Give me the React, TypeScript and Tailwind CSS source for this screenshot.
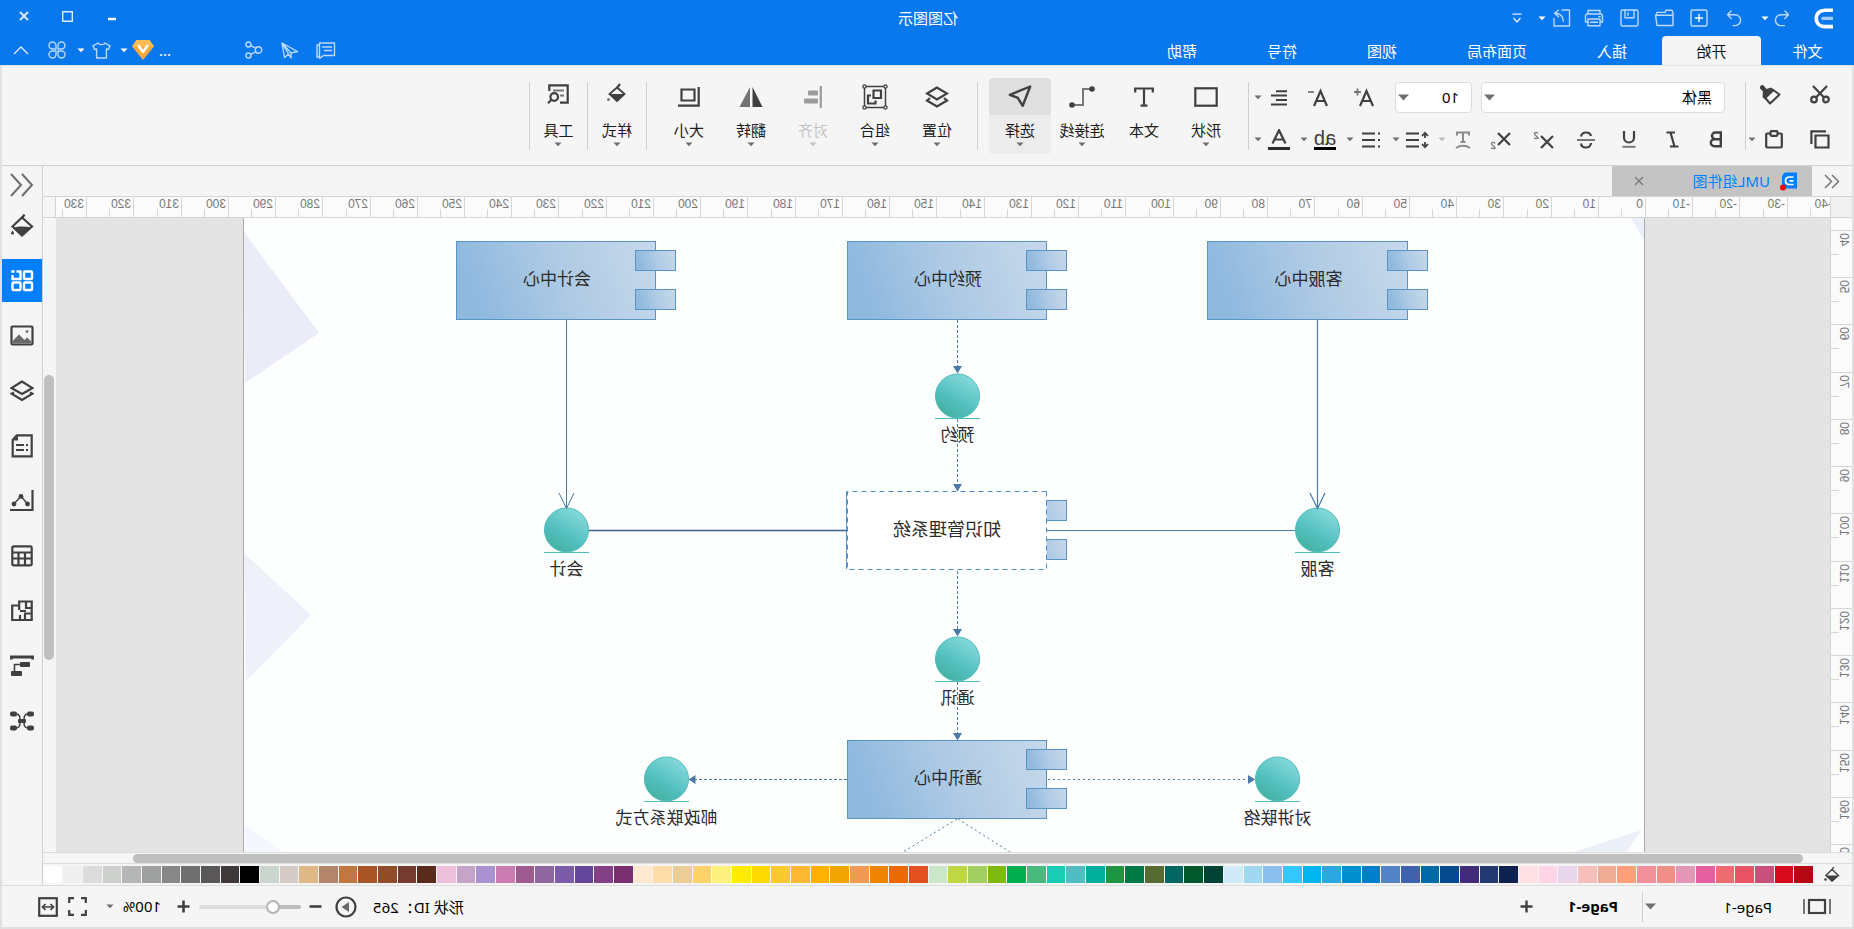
import React from "react";
import type { ReactNode } from "react";

const INK = "#404040";

/* ---------- small building blocks ---------- */

function Svg({ w = 20, h, vb, children, className = "" }: { w?: number; h?: number; vb?: string; children: ReactNode; className?: string }) {
  const height = h ?? w;
  return (
    <svg width={w} height={height} viewBox={vb ?? `0 0 ${w} ${height}`} fill="none" className={`shrink-0 ${className}`} aria-hidden="true">
      {children}
    </svg>
  );
}

function Caret({ color = "#6e6e6e", label = "展开" }: { color?: string; label?: string }) {
  return (
    <button type="button" aria-label={label} className="flex w-2.5 items-center justify-center">
      <Svg w={8} h={5}><path d="M0.5 0.5h7L4 4.2z" fill={color} /></Svg>
    </button>
  );
}

function Tool({ label, className = "w-8", children }: { label: string; className?: string; children: ReactNode }) {
  return (
    <button type="button" aria-label={label} className={`flex h-full items-center justify-center ${className}`}>
      {children}
    </button>
  );
}

/* ---------- title bar ---------- */

const quick = { stroke: "#bcd9fb", strokeWidth: 1.4, strokeLinejoin: "round" as const, strokeLinecap: "round" as const };

function TitleBar() {
  return (
    <div className="flex h-9 items-center">
      <div className="flex h-full flex-1 items-center">
        <Svg w={19} h={21} className="ml-[21px]">
          <path d="M0 2.2h8c5 0 8.7 3.2 8.7 8.2s-3.7 8.2-8.7 8.2H0" stroke="#fff" strokeWidth="3.6" />
          <path d="M1 10.4h9" stroke="#a5cdfb" strokeWidth="3.4" strokeLinecap="round" />
        </Svg>
        <Tool label="撤销" className="ml-5 w-6">
          <Svg w={16} h={17}><path d="M5 1L1.5 4.8 5.2 8.4M1.8 4.8h7.4a5.3 5.3 0 0 1 0 10.8H5.5" {...quick} /></Svg>
        </Tool>
        <Caret color="#fff" label="撤销记录" />
        <Tool label="重做" className="ml-2 w-[35px]">
          <Svg w={16} h={17}><path d="M11 1l3.5 3.8L10.8 8.4M14.2 4.8H6.8a5.3 5.3 0 0 0 0 10.8h2" {...quick} /></Svg>
        </Tool>
        <Tool label="新建" className="w-[35px]">
          <Svg w={18}><rect x="1" y="1" width="16" height="16" rx="1.5" {...quick} /><path d="M9 5.5v7M5.5 9h7" {...quick} stroke="#fff" /></Svg>
        </Tool>
        <Tool label="打开" className="w-[35px]">
          <Svg w={20} h={18}><path d="M1 4l1-2.8h6l1 2.2h8l.8 2.8M1 16.5V7.5l1-1.3h16.5L17 16.5zM1 15V4" {...quick} /></Svg>
        </Tool>
        <Tool label="保存" className="w-[35px]">
          <Svg w={19} h={18}><rect x="1" y="1" width="17" height="16" rx="1.5" {...quick} /><path d="M5 1.2v7.6h9V1.2M11 4v2.2" {...quick} /></Svg>
        </Tool>
        <Tool label="打印" className="w-[35px]">
          <Svg w={20} h={18}><path d="M4 5V1.5h12V5M4 13H1.5V6.5L2.8 5h14.4l1.3 1.5V13H16M4 10h12v6.8H4zM6.5 13.2h7M3.8 7.6h1.5" {...quick} /></Svg>
        </Tool>
        <Tool label="导出" className="w-[30px]">
          <Svg w={18}><path d="M9 1H1.5v16H17V9.5M12.5 1.2l4 3-4 3.6M16 4.2c-4.500 0-8 2.600-8.400 8" {...quick} /></Svg>
        </Tool>
        <Caret color="#fff" label="导出选项" />
        <Tool label="更多" className="ml-2 w-6">
          <Svg w={10} h={11}><path d="M0.5 1.2h9M1.5 5l3.5 4 3.5-4" stroke="#e4f0fe" strokeWidth="1.3" /></Svg>
        </Tool>
      </div>
      <h1 className="pb-px text-[15px] leading-5 text-white">亿图图示</h1>
      <div className="flex h-full flex-1 items-center justify-end pr-0.5 pb-1">
        <Tool label="最小化" className="w-11"><Svg w={8} h={12}><path d="M0 9h8" stroke="#fff" strokeWidth="2.4" /></Svg></Tool>
        <Tool label="最大化" className="w-11"><Svg w={11}><path d="M0.7 0.7h9.6v9.6H0.7z" stroke="#dcebfd" strokeWidth="1.4" /></Svg></Tool>
        <Tool label="关闭" className="w-11"><Svg w={10}><path d="M1 1l8 8M9 1L1 9" stroke="#dcebfd" strokeWidth="2" /></Svg></Tool>
      </div>
    </div>
  );
}

const menuTabs = ["插入", "页面布局", "视图", "符号", "帮助"];

function MenuBar() {
  return (
    <div className="flex h-[30px] justify-between">
      <nav className="flex text-[15px] leading-[30px] text-white">
        <a href="#file" className="w-[93px] text-center">文件</a>
        <a href="#home" className="w-[99px] rounded-t-sm bg-[#f5f5f5] text-center text-[#111]">开始</a>
        {menuTabs.map((t) => (
          <a key={t} href={`#${t}`} className="px-[35px]">{t}</a>
        ))}
      </nav>
      <div className="flex items-center pr-0.5 pb-0.5">
        <Tool label="评论" className="w-9">
          <Svg w={20} h={17}><path d="M3.500 1h15v12.500h-11l-4 3zM6.500 5h9M8.500 8.500h7M3.500 3H1v12.500l2-1.500" {...quick} transform="matrix(-1 0 0 1 20 0)" /></Svg>
        </Tool>
        <Tool label="发送" className="w-9">
          <Svg w={18} h={17}><path d="M17 1L14.5 15.5 10.5 12 8 16V11L1.5 9.500zM17 1L8 11M16.800 1L10.500 12" {...quick} /></Svg>
        </Tool>
        <Tool label="分享" className="w-9">
          <Svg w={18} h={18}>
            <circle cx="4.500" cy="9" r="3.200" {...quick} /><circle cx="14.500" cy="3.500" r="2.500" {...quick} /><circle cx="14.500" cy="14.500" r="2.500" {...quick} />
            <path d="M7.200 7.200l5-2.600M7.200 10.800l5 2.600" {...quick} />
          </Svg>
        </Tool>
        <span className="ml-[60px] w-[22px] text-center text-[15px] leading-5 text-white">...</span>
        <Tool label="会员" className="w-[22px]">
          <Svg w={22} h={20}>
            <path d="M4.500 0h13L22 6.500 11 20 0 6.500z" fill="#f3a93c" />
            <path d="M4.500 0h13L22 6.500H0z" fill="#fbbd55" />
            <path d="M6.800 6l4.200 6 4.200-6" stroke="#fff" strokeWidth="2.600" strokeLinecap="round" strokeLinejoin="round" />
          </Svg>
        </Tool>
        <span className="flex w-4 justify-center"><Caret color="#fff" label="会员选项" /></span>
        <Tool label="主题" className="w-7">
          <Svg w={19} h={17}><path d="M6 1c.8 2.200 6.200 2.200 7 0l5 2.800-1.600 3.800-2-.6V16H4.600V7l-2 .6L1 3.800z" {...quick} /></Svg>
        </Tool>
        <span className="flex w-[14px] justify-center"><Caret color="#fff" label="主题选项" /></span>
        <Tool label="应用" className="w-[34px]">
          <Svg w={18} h={18}>
            <path d="M8 8H4.500A3.500 3.500 0 1 1 8 4.500zM10 8h3.500A3.500 3.500 0 1 0 10 4.500zM8 10H4.500A3.500 3.500 0 1 0 8 13.500zM10 10h3.500A3.500 3.500 0 1 1 10 13.500z" {...quick} />
          </Svg>
        </Tool>
        <Tool label="收起功能区" className="w-[38px]">
          <Svg w={16} h={9}><path d="M1 8l7-7 7 7" stroke="#dcebfd" strokeWidth="1.400" /></Svg>
        </Tool>
      </div>
    </div>
  );
}

/* ---------- ribbon ---------- */

const ink = { stroke: INK, strokeWidth: 2.2 };

function Divider() {
  return <span className="mt-4 h-[68px] w-px shrink-0 bg-[#cfcfcf]" />;
}

function FieldCaret() {
  return (
    <Svg w={11} h={7} className="pointer-events-none absolute top-3 right-[3px]"><path d="M0 0.500h11L5.500 6.500z" fill="#707070" /></Svg>
  );
}

function ClipboardGroup() {
  return (
    <div className="w-[106px] pt-[6px] pl-[7px]">
      <div className="flex h-[45px]">
        <Tool label="剪切" className="w-[50px]">
          <Svg w={20} h={19}>
            <circle cx="4" cy="14.500" r="2.800" {...ink} /><circle cx="16" cy="14.500" r="2.800" {...ink} />
            <path d="M3 1l11 11.500M17 1L6 12.500" {...ink} />
          </Svg>
        </Tool>
        <Tool label="格式刷" className="w-[50px]">
          <Svg w={21} h={20}>
            <path d="M1.500 9.500L8.500 4.500 16.500 12 11 18.500z" stroke={INK} strokeWidth="2" strokeLinejoin="round" />
            <path d="M6.500 5.500L10 2.500l4.500 1.500L17 1a2 2 0 0 1 3.500 3L18 6.500l.5 5.500-2.500 2.500z" fill={INK} />
          </Svg>
        </Tool>
      </div>
      <div className="flex h-[45px]">
        <Tool label="复制" className="w-[50px]">
          <Svg w={20} h={19}><path d="M1.500 5.500h13v12h-13z" {...ink} /><path d="M4 1.400h14.600V14" {...ink} /></Svg>
        </Tool>
        <Tool label="粘贴" className="ml-1 w-[34px]">
          <Svg w={18} h={19}><rect x="1.200" y="3.500" width="15.600" height="14" rx="1" {...ink} /><rect x="5.500" y="1.200" width="7" height="4.600" rx="1" {...ink} fill="#f5f5f5" /></Svg>
        </Tool>
        <Caret label="粘贴选项" />
      </div>
    </div>
  );
}

function FontGroup() {
  return (
    <div className="pt-[6px] pr-1">
      <div className="flex h-[45px] items-center pt-[6px] pl-5">
        <div className="relative mr-[9px]">
          <select aria-label="字体" className="block h-[31px] w-[244px] appearance-none rounded-sm border border-[#dcdcdc] bg-white pl-3 text-[15px] text-black">
            <option>黑体</option>
          </select>
          <FieldCaret />
        </div>
        <div className="relative">
          <select aria-label="字号" className="block h-[31px] w-[77px] appearance-none rounded-sm border border-[#dcdcdc] bg-white pl-3 text-[15px] text-black">
            <option>10</option>
          </select>
          <FieldCaret />
        </div>
        <Tool label="增大字号" className="ml-2 w-[46px]">
          <Svg w={20} h={19}><path d="M1 18L7.500 3 14 18M3.500 13h8" {...ink} /><path d="M13 4h7M16.500 0.500v7" stroke="#777" strokeWidth="1.800" /></Svg>
        </Tool>
        <Tool label="减小字号" className="w-[46px]">
          <Svg w={20} h={19}><path d="M1 18L7.500 3 14 18M3.500 13h8" {...ink} /><path d="M14 4h6" stroke="#777" strokeWidth="1.800" /></Svg>
        </Tool>
        <Tool label="对齐方式">
          <Svg w={18} h={16}><path d="M1 1.200h11M1 5.600h16M1 10h11M1 14.400h16" stroke={INK} strokeWidth="2" /></Svg>
        </Tool>
        <Caret label="对齐选项" />
      </div>
      <div className="flex h-[45px] items-center pl-2">
        <Tool label="加粗" className="w-[43px]">
          <Svg w={13} h={17}><path d="M1.200 1.500h5.500a3.300 3.300 0 0 1 0 6.700H1.200zM1.200 8.200h6.500a3.500 3.500 0 0 1 0 7H1.200z" stroke={INK} strokeWidth="2.400" /></Svg>
        </Tool>
        <Tool label="斜体" className="w-[43px]">
          <Svg w={13} h={17}><path d="M4 1.500h8.500M0.500 15.500H9M8.500 1.500l-4 14" {...ink} /></Svg>
        </Tool>
        <Tool label="下划线" className="w-[43px]">
          <Svg w={14} h={17}><path d="M2 0v6.500a5 5 0 0 0 10 0V0" {...ink} /><path d="M0.500 15.800h13" stroke="#777" strokeWidth="2" /></Svg>
        </Tool>
        <Tool label="删除线" className="w-[43px]">
          <Svg w={18} h={18}><path d="M14 5.500C13.500 3 11.500 1.500 9 1.500S4.500 2.500 4 5M4 12c.3 3 2.500 4.500 5 4.500s4.800-1.200 5-4" {...ink} /><path d="M0 9h18" stroke="#777" strokeWidth="2" /></Svg>
        </Tool>
        <Tool label="上标" className="w-[43px]">
          <Svg w={21} h={18}><path d="M1 5l12 12M13 5L1 17" {...ink} /><path d="M16 2.500c.5-1.500 3.500-1.500 3.500.3S16 5.500 16 7.300h4" stroke="#777" strokeWidth="1.300" /></Svg>
        </Tool>
        <Tool label="下标" className="w-[43px]">
          <Svg w={21} h={18}><path d="M1 2l12 12M13 2L1 14" {...ink} /><path d="M16 12.500c.5-1.500 3.500-1.500 3.500.3S16 15.500 16 17.300h4" stroke="#777" strokeWidth="1.300" /></Svg>
        </Tool>
        <Tool label="文字路径">
          <Svg w={16} h={18}><path d="M2 4.500V1.500h12v3M8 1.500v9.500M5.500 11h5" stroke="#8c8c8c" strokeWidth="2" /><path d="M1 17c4-3 10-3 14 0" stroke="#8c8c8c" strokeWidth="1.800" /></Svg>
        </Tool>
        <Caret color="#bdbdbd" label="文字路径选项" />
        <Tool label="行距" className="ml-1 w-8">
          <Svg w={24} h={18}><path d="M4 2v5M4 11v5M1 5l3-3.200L7 5M1 13l3 3.200L7 13" stroke={INK} strokeWidth="1.800" /><path d="M10 2.500h13M10 9h13M10 15.500h13" stroke={INK} strokeWidth="2.200" /></Svg>
        </Tool>
        <Caret label="行距选项" />
        <Tool label="列表" className="ml-1 w-8">
          <Svg w={18} h={16}><path d="M0 1.500h2M0 8h2M0 14.500h2M5 1.500h13M5 8h13M5 14.500h13" stroke={INK} strokeWidth="2.200" /></Svg>
        </Tool>
        <Caret label="列表选项" />
        <Tool label="文字高亮" className="ml-1 w-8">
          <span className="border-b-3 border-black font-['Liberation_Sans'] text-[20px] leading-[18px] text-[#404040]">ab</span>
        </Tool>
        <Caret label="高亮选项" />
        <Tool label="文字颜色" className="ml-1 w-8">
          <Svg w={22} h={21}><path d="M4.500 14.500L11 1.200l6.500 13.300M6.500 10.500h9" {...ink} /><path d="M0 19.500h22" stroke="#2c2c2c" strokeWidth="3" /></Svg>
        </Tool>
        <Caret label="颜色选项" />
      </div>
    </div>
  );
}

function BigTool({ label, children, caret = true, active = false, disabled = false, className = "w-[62px]" }: { label: string; children: ReactNode; caret?: boolean; active?: boolean; disabled?: boolean; className?: string }) {
  return (
    <button type="button" disabled={disabled} aria-pressed={active} className={`mt-3 flex h-[76px] flex-col items-center rounded-sm ${active ? "bg-[#ececec]" : ""} ${className}`}>
      <span className={`flex h-[37px] w-full items-center justify-center rounded-t-sm ${active ? "bg-[#dfdfdf]" : ""}`}>{children}</span>
      <span className={`mt-[5px] text-[15px] leading-5 ${disabled ? "text-[#c4c4c4]" : "text-[#1c1c1c]"}`}>{label}</span>
      {caret && <Svg w={8} h={5} className="mt-0.5"><path d="M0.500 0.500h7L4 4.200z" fill={disabled ? "#c4c4c4" : "#6e6e6e"} /></Svg>}
    </button>
  );
}

function Ribbon() {
  return (
    <div className="flex h-[101px] border-t border-b border-t-[#e6e6e6] border-b-[#d2d2d2]">
      <ClipboardGroup />
      <Divider />
      <FontGroup />
      <Divider />
      <div className="flex pr-[11px] pl-[11px]">
        <BigTool label="形状"><Svg w={24} h={20}><rect x="1.300" y="1.300" width="21.400" height="17.400" {...ink} /></Svg></BigTool>
        <BigTool label="文本" caret={false}><Svg w={20} h={20}><path d="M1.200 5.500V1.500h17.600v4M10 1.500v17M6.500 18.600h7" {...ink} /></Svg></BigTool>
        <BigTool label="连接线">
          <Svg w={26} h={22}><path d="M4 3h8v16h10" stroke="#777" strokeWidth="2" /><circle cx="3" cy="3" r="2.800" fill={INK} /><circle cx="23" cy="19" r="2.800" fill={INK} /></Svg>
        </BigTool>
        <BigTool label="选择" active><Svg w={24} h={23}><path d="M1.800 1.500l20.400 8.300-8 3L9.300 20.800z" stroke={INK} strokeWidth="2.400" strokeLinejoin="round" /></Svg></BigTool>
      </div>
      <Divider />
      <div className="flex pr-[11px] pl-[9px]">
        <BigTool label="位置">
          <Svg w={24} h={22}><path d="M12 1.500L22 7.500 12 13.500 2 7.500z" {...ink} /><path d="M5 12l-3 2.500L12 20.500l10-6-3-2.500" {...ink} /></Svg>
        </BigTool>
        <BigTool label="组合">
          <Svg w={26} h={26}>
            <rect x="2.500" y="2.500" width="21" height="21" stroke={INK} strokeWidth="1.500" />
            <g fill="#f5f5f5" stroke={INK} strokeWidth="1.300"><circle cx="2.500" cy="2.500" r="1.600" /><circle cx="23.500" cy="2.500" r="1.600" /><circle cx="2.500" cy="23.500" r="1.600" /><circle cx="23.500" cy="23.500" r="1.600" /></g>
            <path d="M7 6.500h7.500v7.500H7zM17 11.500h3v8h-7.500v-3" {...ink} />
          </Svg>
        </BigTool>
        <BigTool label="对齐" disabled>
          <Svg w={18} h={22}><path d="M1.200 0v22" stroke="#9b9b9b" strokeWidth="2.200" /><rect x="4" y="4.500" width="10" height="5" rx="1" fill="#9b9b9b" /><rect x="4" y="12.500" width="14" height="5" rx="1" fill="#9b9b9b" /></Svg>
        </BigTool>
        <BigTool label="翻转"><Svg w={24} h={20}><path d="M10.500 0v20H0.500z" fill="#404040" /><path d="M13 0v20h10.500z" fill="#737373" /></Svg></BigTool>
        <BigTool label="大小"><Svg w={22} h={20}><path d="M5.500 2.500h13v11h-13z" {...ink} /><path d="M1.300 0v18.700H22" {...ink} /></Svg></BigTool>
      </div>
      <Divider />
      <BigTool label="样式" className="w-[58px]">
        <Svg w={20} h={21} className="mb-[6px]"><path d="M2.500 11L10 4.500 17.500 11 10 18z" stroke={INK} strokeWidth="1.800" /><path d="M2.500 11h15L10 18.500z" fill={INK} /><path d="M10 5L7 1" stroke={INK} strokeWidth="2.200" /><circle cx="18.500" cy="16.500" r="1.500" fill="#777" /></Svg>
      </BigTool>
      <Divider />
      <BigTool label="工具" className="w-[57px]">
        <Svg w={22} h={20} className="mb-[6px]"><path d="M9 18.700H1.300V1.300h18.400V7" {...ink} /><path d="M5 6.500h11M5 11.500h4" stroke="#777" strokeWidth="2" /><circle cx="14.800" cy="13" r="3.800" {...ink} /><path d="M17.500 15.700l3.500 3.500" {...ink} /></Svg>
      </BigTool>
      <Divider />
    </div>
  );
}

/* ---------- document tabs ---------- */

function DocumentTabs() {
  return (
    <div className="flex h-[31px] shrink-0 border-b border-[#d4d4d4]">
      <Tool label="展开左侧面板" className="w-10">
        <Svg w={16} h={15}><path d="M8 1L1.500 7.500 8 14M15 1L8.500 7.500 15 14" stroke="#777" strokeWidth="1.500" /></Svg>
      </Tool>
      <div className="flex w-[200px] items-center bg-[#c4c4c4] pl-[15px]">
        <Svg w={17} h={20}>
          <path d="M0 1.500h12l3 3v13H0z" fill="#0080ff" />
          <path d="M3.500 6h4.200c5 0 5 7.500 0 7.500H3.500M3.500 9.800h4" stroke="#fff" strokeWidth="1.700" />
          <circle cx="14" cy="16.500" r="3" fill="#f00" />
        </Svg>
        <a href="#uml" className="ml-[10px] flex-1 text-[15px] leading-5 text-[#0080ff]">UML组件图</a>
        <button type="button" aria-label="关闭标签" className="mr-[22px]"><Svg w={10}><path d="M1 1l8 8M9 1L1 9" stroke="#777" strokeWidth="1.300" /></Svg></button>
      </div>
    </div>
  );
}

/* ---------- rulers ---------- */

const STEP = 47.24;

function TopRuler() {
  const marks = Array.from({ length: 38 }, (_, i) => i - 4);
  return (
    <svg width="100%" height="20" className="block min-w-0 flex-1 bg-[#fbfbfb] font-['Liberation_Sans']">
      {marks.map((n) => {
        const x = Math.round(184 + n * STEP);
        return (
          <g key={n}>
            <path d={`M${x + 0.5} 0V20M${Math.round(x + STEP / 2) + 0.5} 12V20`} stroke="#d6d6d6" />
            <text x={x + 3} y="11" fontSize="12" fill="#777">{n * 10}</text>
          </g>
        );
      })}
    </svg>
  );
}

function SideRuler() {
  const marks = Array.from({ length: 14 }, (_, i) => i);
  return (
    <svg width="21" height="100%" className="block bg-[#fbfbfb] font-['Liberation_Sans']">
      {marks.map((n) => {
        const y = Math.round(12 + n * STEP);
        const label = String(40 + n * 10);
        return (
          <g key={n}>
            <path d={`M0 ${y + 0.5}H21M13 ${Math.round(y + STEP / 2) + 0.5}H21`} stroke="#d6d6d6" />
            <text transform={`translate(12 ${y + 3}) rotate(-90)`} textAnchor="end" fontSize="12" fill="#777">{label}</text>
          </g>
        );
      })}
    </svg>
  );
}

/* ---------- diagram ---------- */

function Component({ x, y, w = 199, label }: { x: number; y: number; w?: number; label: string }) {
  return (
    <g>
      <g stroke="#5a94c3">
        <rect x={x} y={y} width={w} height="78" fill="url(#blue)" />
        <rect x={x - 20} y={y + 9} width="40" height="20" fill="url(#blue)" />
        <rect x={x - 20} y={y + 48} width="40" height="20" fill="url(#blue)" />
      </g>
      <text x={x + w / 2 - 1} y={y + 43} textAnchor="middle" fontSize="17" fill="#2b2b2b">{label}</text>
    </g>
  );
}

function Port({ x, y, label }: { x: number; y: number; label: string }) {
  return (
    <g>
      <circle cx={x} cy={y} r="22" fill="url(#teal)" stroke="#4dbcba" />
      <path d={`M${x - 22.5} ${y + 22.5}h45`} stroke="#4dbcba" />
      <text x={x} y={y + 45} textAnchor="middle" fontSize="17" fill="#2b2b2b">{label}</text>
    </g>
  );
}

function Diagram() {
  const wire = "#4a7aa5";
  return (
    <svg width="1400" height="100%" viewBox="210 218 1400 634" preserveAspectRatio="xMidYMin slice" className="block" role="img" aria-label="UML组件图">
      <defs>
        <linearGradient id="blue" x1="0" y1="0" x2="1" y2="0.150">
          <stop offset="0" stopColor="#c7d9eb" />
          <stop offset="0.500" stopColor="#b0cbe5" />
          <stop offset="1" stopColor="#8fb9df" />
        </linearGradient>
        <linearGradient id="teal" x1="0.200" y1="0" x2="0.800" y2="1">
          <stop offset="0" stopColor="#8bdcde" />
          <stop offset="0.600" stopColor="#52bfbf" />
          <stop offset="1" stopColor="#43af9b" />
        </linearGradient>
      </defs>
      <path d="M1610 232L1535 333 1609 383z" fill="#ebecf8" />
      <path d="M1610 553L1543 615 1608 681z" fill="#eef1f9" />
      <path d="M1609 825L1571 852h38z" fill="#f4f7fe" />
      <path d="M212 830L280 852H228z" fill="#ebf0f8" />
      <path d="M223 218H210v22z" fill="#ebeff9" />

      <Component x={446.5} y={241.5} w={200} label="客服中心" />
      <Component x={807.5} y={241.5} label="预约中心" />
      <Component x={1198.5} y={241.5} label="会计中心" />
      <Component x={807.5} y={740.5} label="通讯中心" />

      <g fill="url(#blue)" stroke="#5a94c3">
        <rect x="787.5" y="500.5" width="40" height="20" />
        <rect x="787.5" y="539.5" width="40" height="20" />
      </g>
      <rect x="807.5" y="491.5" width="199" height="78" fill="#fff" stroke="#4a8ede" strokeDasharray="5 4" />
      <path d="M1007.500 491v78" stroke="#5a94c3" />
      <text x="907" y="536" textAnchor="middle" fontSize="18" fill="#2b2b2b">知识管理系统</text>

      <Port x={896.5} y={396} label="预约" />
      <Port x={1287.5} y={530} label="会计" />
      <Port x={536.5} y={530} label="客服" />
      <Port x={896.5} y={659} label="通讯" />
      <Port x={1187.5} y={779} label="邮政联系方式" />
      <Port x={576.5} y={779} label="对讲联络" />

      <g stroke={wire} fill="none">
        <path d="M1287.500 320v188M1280 493l7.500 15.500L1295 493" />
        <path d="M536.500 320v188M529 493l7.500 15.500L544 493" strokeWidth="1.200" />
        <path d="M559 530.500h248" />
        <path d="M1007.500 530.500H1265" stroke="#3f5f93" strokeWidth="1.400" />
        <path d="M896.500 320v48M896.500 419v66M896.500 571v60M896.500 682v52" strokeDasharray="3 2" />
        <path d="M1007 779.500h152" strokeDasharray="3 2" />
        <path d="M806 779.500H606" strokeDasharray="2 3" />
        <path d="M897 819l54 33M896 819l-52 33" strokeDasharray="2 3" />
      </g>
      <g fill={wire}>
        <path d="M892 366h9l-4.500 7.500z" /><path d="M892 484h9l-4.500 7.500z" /><path d="M892 629h9l-4.500 7.500z" /><path d="M892 733h9l-4.500 7.500z" />
        <path d="M1158.500 775v9l7-4.500z" /><path d="M606 775v9l-7-4.500z" />
      </g>
    </svg>
  );
}

function Workspace() {
  return (
    <div className="flex min-h-0 flex-1 flex-col">
      <div className="flex h-[21px] shrink-0 border-b border-[#d4d4d4]">
        <span className="w-[22px] border-r border-[#d4d4d4] bg-[#f0f0f0]" />
        <TopRuler />
        <span className="w-[13px] border-l border-[#d4d4d4]" />
      </div>
      <div className="flex min-h-0 flex-1">
        <div className="w-[22px] shrink-0 overflow-hidden border-r border-[#d4d4d4]"><SideRuler /></div>
        <div className="flex min-w-0 flex-1 justify-center overflow-hidden bg-[#e4e4e4] pr-[3px]">
          <div className="shrink-0 border-x border-[#ababab] bg-[#fdfefe]"><Diagram /></div>
        </div>
        <div className="w-[13px] shrink-0 pt-[157px] pr-px pl-[2px]">
          <div className="h-[285px] rounded-full bg-[#bfbfbf]" />
        </div>
      </div>
      <div className="flex h-3 shrink-0 items-center border-t border-b border-[#dcdcdc] pr-[90px] pl-[49px]">
        <div className="h-[9px] flex-1 rounded-full bg-[#bfbfbf]" />
      </div>
    </div>
  );
}

const swatches = [
  "#b50714", "#d8091c", "#c8507b", "#e85466", "#ec6c72", "#e65f9f", "#e297b7", "#f08f88", "#f2909b", "#ffa07a",
  "#f0ab95", "#f7bfbb", "#ead6ea", "#ffd4e6", "#fee0e5", "#0f214e", "#223a70", "#412c7a", "#07498f", "#0269a8",
  "#3e62ae", "#5384c7", "#0080cc", "#0090d0", "#2ba8e2", "#00b4f0", "#33c8fb", "#8bc0ec", "#a0d8f0", "#d0ebf7",
  "#004335", "#00582d", "#006661", "#556b2f", "#007a45", "#1e9641", "#00b09c", "#50bdc3", "#19cdb4", "#49b97e",
  "#00ae50", "#7fb80e", "#a3cf62", "#bed742", "#cbe6c8", "#e2501f", "#ec6800", "#f08300", "#f29a53", "#f0a500",
  "#ffb000", "#fdb933", "#f8ca30", "#ffd900", "#ffec00", "#fdf17e", "#fcd26b", "#ebcd96", "#ffdca8", "#ffe8d0",
  "#7a306f", "#844084", "#63459a", "#7a5ca8", "#8f67a0", "#9f5a8f", "#cb7cb0", "#a992cf", "#c6a4c8", "#ecc0da",
  "#5a2a1c", "#753a30", "#914d2a", "#a85526", "#c1773f", "#b3866b", "#deb887", "#d5cbc6", "#cad5cd", "#000000",
  "#3e3838", "#5a5758", "#707070", "#878787", "#9da09e", "#b4b7b5", "#cdcfcd", "#dcdcdc", "#efefef", "#ffffff",
];

function Palette() {
  return (
    <div className="flex h-[21px] shrink-0 items-center">
      <Tool label="填充颜色" className="w-[39px]">
        <Svg w={16} h={17}><path d="M1.500 9.500L8 3.500l6 6L8 15z" stroke={INK} strokeWidth="1.400" /><path d="M1.500 9.500H14L8 15.500z" fill={INK} /><path d="M8 4L6.500 1" stroke={INK} strokeWidth="1.400" /><circle cx="14.500" cy="13.500" r="1.300" fill={INK} /></Svg>
      </Tool>
      <div className="flex h-[17px] min-w-0 flex-1 gap-px">
        {swatches.map((c, i) => (
          <button key={i} type="button" aria-label={c} className="min-w-0 flex-1" style={{ backgroundColor: c }} />
        ))}
      </div>
    </div>
  );
}

/* ---------- side bar ---------- */

const sideItems: { label: string; icon: ReactNode }[] = [
  {
    label: "样式",
    icon: <Svg w={24} h={24}><path d="M2 12.500L12 3.500l9.500 9L12 21.500z" {...ink} /><path d="M2.500 13.500c6-1.500 13-1.500 18 0L12 22z" fill={INK} /><path d="M12 4L9.500 0.500" {...ink} /><path d="M21.500 16.500c2 2.500 2 4 0 4s-2-1.500 0-4z" fill={INK} /></Svg>,
  },
  {
    label: "符号库",
    icon: <Svg w={24} h={22}><g stroke="#fff" strokeWidth="2.400"><rect x="2" y="1.500" width="8" height="7.500" rx="1" /><path d="M17.500 1.500H13.500v7.500h8V5M19.500 1.500h3.200" /><rect x="2" y="12.500" width="8" height="7.500" rx="1" /><rect x="13.500" y="12.500" width="8" height="7.500" rx="1" /></g></Svg>,
  },
  {
    label: "图片",
    icon: <Svg w={24} h={22}><rect x="1.500" y="1.500" width="21" height="18" rx="1" {...ink} /><path d="M3 18.500v-2.500l4-3.500 2.500 2.500 5.500-5.500 6 6v3z" fill="#6a6a6a" /><circle cx="7" cy="6.500" r="1.500" fill="#777" /></Svg>,
  },
  {
    label: "图层",
    icon: <Svg w={24} h={22}><path d="M12 1.500L22.500 8 12 14 1.500 8z" {...ink} /><path d="M4 12.500l-2.500 1.200L12 20l10.500-6.300L20 12.500" {...ink} /></Svg>,
  },
  {
    label: "备注",
    icon: <Svg w={22} h={24}><path d="M1.300 1.300h15l4 4.500v16.500h-19z" {...ink} /><path d="M15 1.500v5h5z" fill={INK} /><path d="M5 11h2M9 11h8M5 16h2M9 16h8" {...ink} /></Svg>,
  },
  {
    label: "图表",
    icon: <Svg w={24} h={22}><path d="M1.500 0v20H24" {...ink} /><path d="M6.500 14L13 6l7 8" stroke={INK} strokeWidth="1.400" /><circle cx="6.500" cy="14" r="2.400" fill={INK} /><circle cx="13" cy="6.500" r="2.400" fill={INK} /><circle cx="20" cy="14" r="2.400" fill={INK} /></Svg>,
  },
  {
    label: "表格",
    icon: <Svg w={22} h={22}><rect x="1.300" y="1.300" width="19.400" height="19" rx="1.500" {...ink} /><path d="M1 7.500h20M1 13.500h20M8 7.500V20M14.500 7.500V20" {...ink} /></Svg>,
  },
  {
    label: "平面图",
    icon: <Svg w={22} h={22}><path d="M1.300 1.500h12.500v4h7v14.500H1.300zM1.300 8H7V1.500M1.300 13.500H8V20M7 11h6M13.800 5.500V10M13 20v-5" {...ink} /></Svg>,
  },
  {
    label: "甘特图",
    icon: <Svg w={24} h={22}><path d="M1.200 4.500V2h21.600v2.500" stroke={INK} strokeWidth="3" /><rect x="4" y="7" width="10" height="5" rx="1" fill={INK} /><rect x="12" y="16" width="11" height="5" rx="1" fill={INK} /><path d="M14 9.500h5.500V16" stroke={INK} strokeWidth="1.600" /></Svg>,
  },
  {
    label: "思维导图",
    icon: <Svg w={24} h={22}><path d="M6 4c4 0 4 3 4 7s0 7-4 7M18 4c-4 0-4 3-4 7s0 7 4 7M9 11h6" stroke={INK} strokeWidth="1.500" /><g fill={INK}><rect x="0" y="1.500" width="7" height="5" rx="2" /><rect x="17" y="1.500" width="7" height="5" rx="2" /><rect x="0" y="15.500" width="7" height="5" rx="2" /><rect x="17" y="15.500" width="7" height="5" rx="2" /><rect x="8" y="9" width="8" height="4" rx="1" /></g></Svg>,
  },
];

function SideBar() {
  return (
    <aside className="flex w-[41px] shrink-0 flex-col border-l border-[#d0d0d0]">
      <Tool label="收起面板" className="w-full max-h-[38px] pr-px">
        <Svg w={24} h={24}><path d="M12 1L2 12l10 11M23 1L13 12l10 11" stroke="#6e6e6e" strokeWidth="2" /></Svg>
      </Tool>
      <div className="flex flex-col gap-3">
        {sideItems.map((it, i) => (
          <button key={it.label} type="button" aria-label={it.label} className={`flex h-[43px] items-center justify-center ${i === 1 ? "bg-[#0080ff]" : ""}`}>
            {it.icon}
          </button>
        ))}
      </div>
    </aside>
  );
}

/* ---------- status bar ---------- */

function StatusBar() {
  return (
    <footer className="flex h-[42px] shrink-0 items-center justify-between border-t border-[#dcdcdc] text-[15px] text-black">
      <div className="flex h-full items-center">
        <Tool label="页面视图" className="w-[70px]">
          <Svg w={28} h={17}><path d="M1 1v15M27 1v15" stroke="#777" strokeWidth="2" /><rect x="6" y="2" width="16" height="13" {...ink} /></Svg>
        </Tool>
        <span className="w-[115px] pt-0.5 pl-2.5">Page-1</span>
        <button type="button" aria-label="选择页面" className="w-6 pl-[11px]"><Svg w={11} h={7}><path d="M0 0.500h11L5.500 6.500z" fill="#707070" /></Svg></button>
        <span className="h-[30px] w-px bg-[#cfcfcf]" />
        <a href="#page-1" className="w-[93px] pl-6 font-bold">Page-1</a>
        <Tool label="添加页面" className="w-11"><Svg w={13}><path d="M6.500 0.500v12M0.500 6.500h12" {...ink} strokeWidth={2.4} /></Svg></Tool>
      </div>
      <div className="flex h-full items-center">
        <span className="mr-[15px] pt-0.5">形状 ID：265</span>
        <Tool label="演示" className="w-6"><Svg w={22}><circle cx="11" cy="11" r="9.500" {...ink} /><path d="M8 6v10l7.500-5z" fill="#6a6a6a" /></Svg></Tool>
        <Tool label="缩小" className="ml-[6px] w-6"><Svg w={13}><path d="M0.500 6.500h12" {...ink} strokeWidth={2.6} /></Svg></Tool>
        <label className="relative ml-[3px] flex h-5 w-[102px] items-center">
          <span className="sr-only">缩放</span>
          <input
            type="range"
            min={0}
            max={100}
            defaultValue={24}
            className="h-1 w-full appearance-none rounded-full bg-linear-to-r from-[#bdbdbd] from-25% to-[#dddddd] to-25% [&::-webkit-slider-thumb]:size-[14px] [&::-webkit-slider-thumb]:appearance-none [&::-webkit-slider-thumb]:rounded-full [&::-webkit-slider-thumb]:border-2 [&::-webkit-slider-thumb]:border-[#b5b5b5] [&::-webkit-slider-thumb]:bg-white"
          />
        </label>
        <Tool label="放大" className="ml-[3px] w-6"><Svg w={13}><path d="M6.500 0.500v12M0.500 6.500h12" {...ink} strokeWidth={2.6} /></Svg></Tool>
        <span className="ml-[11px] w-[46px]">100%</span>
        <Caret label="缩放比例" />
        <Tool label="全屏" className="ml-3 w-[30px]"><Svg w={19}><path d="M1.200 6V1.200H6M13 1.200h4.800V6M17.800 13v4.800H13M6 17.800H1.200V13" {...ink} /></Svg></Tool>
        <Tool label="适应宽度" className="mr-[31px] w-[30px]"><Svg w={20}><rect x="1.200" y="1.200" width="17.600" height="17.600" {...ink} /><path d="M5 10h10M7.500 7L4.500 10l3 3M12.500 7l3 3-3 3" stroke={INK} strokeWidth="1.700" /></Svg></Tool>
      </div>
    </footer>
  );
}

export default function App() {
  return (
    <div className="flex h-screen -scale-x-100 flex-col overflow-hidden bg-[#f5f5f5] font-['Noto_Sans','Noto_Sans_CJK_SC',sans-serif]">
      <header className="shrink-0 bg-[#0a78ed]">
        <TitleBar />
        <div className="h-[29px]"><MenuBar /></div>
      </header>
      <div className="flex min-h-0 flex-1 flex-col border-x-2 border-b-2 border-[#e0e0e0]">
        <div className="shrink-0"><Ribbon /></div>
        <main className="flex min-h-0 flex-1">
          <div className="flex min-w-0 flex-1 flex-col">
            <DocumentTabs />
            <Workspace />
            <Palette />
          </div>
          <SideBar />
        </main>
        <StatusBar />
      </div>
    </div>
  );
}
